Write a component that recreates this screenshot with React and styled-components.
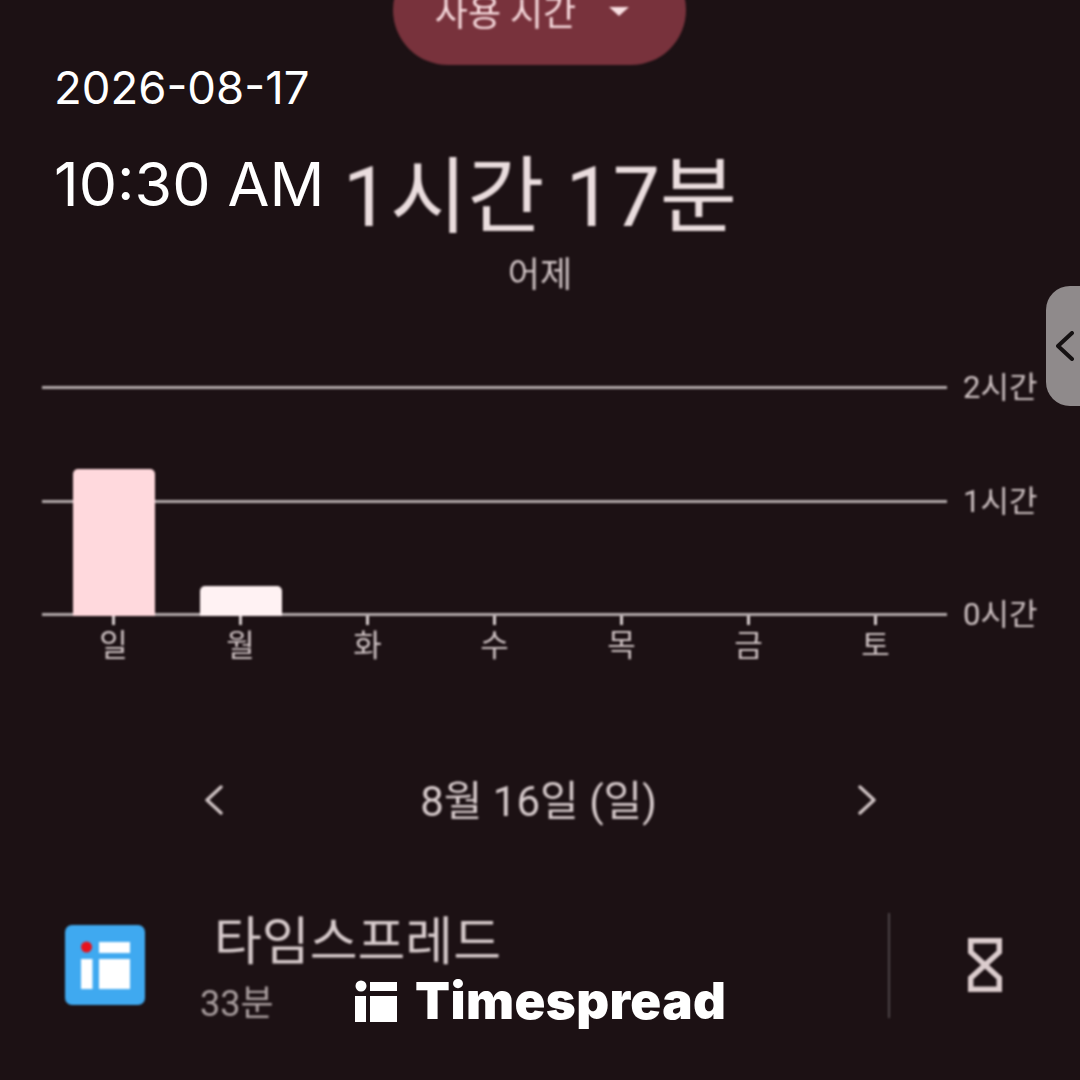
import React from 'react';
import styled, { createGlobalStyle } from 'styled-components';

const GlobalStyle = createGlobalStyle`
  html, body {
    margin: 0;
    padding: 0;
    background: #1c1114;
  }
`;

const Page = styled.div`
  position: relative;
  width: 1080px;
  height: 1080px;
  overflow: hidden;
  background: #1c1114;
  font-family: Roboto, "Noto Sans CJK KR", sans-serif;
`;

const Screen = styled.div`
  display: flex;
  flex-direction: column;
  align-items: center;
  height: 100%;
  filter: blur(0.8px);
`;

const Pill = styled.div`
  display: flex;
  align-items: center;
  justify-content: center;
  gap: 33px;
  width: 278px;
  height: 110px;
  margin-top: -45px;
  margin-right: 1px;
  padding-right: 15px;
  border-radius: 55px;
  background: #78323c;
  color: #f6d9dc;
  font-size: 36px;
  flex-shrink: 0;
`;

const Caret = styled.span`
  width: 0;
  height: 0;
  border-left: 10px solid transparent;
  border-right: 10px solid transparent;
  border-top: 9px solid #f9dfe2;
  margin-top: 2px;
`;

const Total = styled.div`
  margin-top: 87px;
  color: #eaddde;
  font-size: 84px;
  line-height: 92px;
`;

const Sub = styled.div`
  margin-top: 10px;
  color: #cfc3c4;
  font-size: 35px;
  line-height: 44px;
`;

const Chart = styled.div`
  align-self: stretch;
  display: flex;
  align-items: flex-start;
  margin-top: 88px;
  padding-left: 42px;
`;

const Plot = styled.div`
  width: 905px;
`;

const Grid = styled.div`
  position: relative;
  height: 230px;
  display: flex;
  flex-direction: column;
  justify-content: space-between;
`;

const GridLine = styled.div`
  height: 3px;
  background: #b3aaab;
`;

const Bars = styled.div`
  position: absolute;
  left: 8px;
  right: 8px;
  bottom: 0;
  display: grid;
  grid-template-columns: repeat(7, 127px);
  align-items: end;
`;

const BarSlot = styled.div`
  display: flex;
  justify-content: center;
`;

const Bar = styled.div`
  width: 82px;
  height: ${p => p.$h}px;
  border-radius: 5px 5px 0 0;
  background: ${p => p.$color};
`;

const Days = styled.div`
  display: grid;
  grid-template-columns: repeat(7, 127px);
  padding: 0 8px;
`;

const Day = styled.div`
  display: flex;
  flex-direction: column;
  align-items: center;
  color: #cfc3c4;
  font-size: 31px;
  line-height: 40px;

  &::before {
    content: '';
    width: 3px;
    height: 9px;
    margin-bottom: 1px;
    background: #d8cecf;
  }
`;

const YAxis = styled.div`
  height: 230px;
  margin-left: 16px;
  display: flex;
  flex-direction: column;
  justify-content: space-between;
  color: #cfc3c4;
  font-size: 31px;
`;

const YLabel = styled.div`
  height: 3px;
  line-height: 3px;
  white-space: nowrap;
`;

const DateNav = styled.div`
  align-self: stretch;
  display: flex;
  align-items: center;
  justify-content: space-between;
  margin-top: 105px;
  padding: 0 204px 0 205px;
  color: #d6cacb;
  font-size: 42px;
  line-height: 54px;
`;

const NavChevron = styled.svg`
  width: 18px;
  height: 30px;
  flex-shrink: 0;
  fill: none;
  stroke: ${p => p.$color};
  stroke-width: ${p => p.$weight}px;
  stroke-linecap: round;
  stroke-linejoin: round;
`;

const DateLabel = styled.span`
  margin-top: 4px;
  margin-right: 4px;
`;

const AppRow = styled.div`
  align-self: stretch;
  display: flex;
  align-items: center;
  margin-top: 77px;
  padding: 0 0 0 65px;
`;

const AppIcon = styled.svg`
  width: 80px;
  height: 80px;
  flex-shrink: 0;
`;

const AppText = styled.div`
  width: 743px;
  margin-top: 8px;
  padding-left: 55px;
  box-sizing: border-box;
`;

const AppName = styled.div`
  margin-left: 14px;
  color: #d6cacb;
  font-size: 52px;
  line-height: 58px;
`;

const AppTime = styled.div`
  margin-top: 12px;
  color: #a99e9f;
  font-size: 36px;
  line-height: 40px;
`;

const Divider = styled.div`
  width: 2px;
  height: 105px;
  background: #4e4548;
`;

const Hourglass = styled.svg`
  width: 34px;
  height: 54px;
  margin-left: 78px;
`;

const SideHandle = styled.div`
  position: absolute;
  top: 286px;
  right: 0;
  width: 24px;
  height: 120px;
  padding-left: 10px;
  display: flex;
  align-items: center;
  border-radius: 24px 0 0 24px;
  background: #8f8a8b;
`;

const Stamp = styled.div`
  position: absolute;
  left: 54px;
  color: #ffffff;
  font-family: Inter, sans-serif;
  white-space: nowrap;
`;

const StampDate = styled(Stamp)`
  top: 60px;
  font-size: 45.500px;
  line-height: 56px;
`;

const StampTime = styled(Stamp)`
  top: 147px;
  font-size: 60.800px;
  line-height: 74px;
`;

const Brand = styled.div`
  position: absolute;
  left: 355px;
  top: 972px;
  display: flex;
  align-items: center;
  gap: 18px;
  color: #ffffff;
  font-family: Inter, sans-serif;
  font-size: 51px;
  font-weight: 900;
  line-height: 58px;
  letter-spacing: 0.4px;
`;

const days = ['일', '월', '화', '수', '목', '금', '토'];
const bars = [
  { h: 147, color: '#ffd9dd' },
  { h: 30, color: '#fff2f3' },
];

const Chevron = ({ left, color, weight = 3.4 }) => (
  <NavChevron viewBox="0 0 18 30" $color={color} $weight={weight}>
    <path d={left ? 'M16 2L2 15L16 28' : 'M2 2L16 15L2 28'} />
  </NavChevron>
);

export default function App() {
  return (
    <Page>
      <GlobalStyle />
      <Screen>
        <Pill>
          <span>사용 시간</span>
          <Caret />
        </Pill>
        <Total>1시간 17분</Total>
        <Sub>어제</Sub>
        <Chart>
          <Plot>
            <Grid>
              <GridLine />
              <GridLine />
              <GridLine />
              <Bars>
                {days.map((d, i) => (
                  <BarSlot key={d}>
                    {bars[i] && <Bar $h={bars[i].h} $color={bars[i].color} />}
                  </BarSlot>
                ))}
              </Bars>
            </Grid>
            <Days>
              {days.map(d => <Day key={d}>{d}</Day>)}
            </Days>
          </Plot>
          <YAxis>
            <YLabel>2시간</YLabel>
            <YLabel>1시간</YLabel>
            <YLabel>0시간</YLabel>
          </YAxis>
        </Chart>
        <DateNav>
          <Chevron left color="#cfc3c4" />
          <DateLabel>8월 16일 (일)</DateLabel>
          <Chevron color="#cfc3c4" />
        </DateNav>
        <AppRow>
          <AppIcon viewBox="0 0 80 80">
            <rect width="80" height="80" rx="7" fill="#3fa9f0" />
            <circle cx="21.500" cy="22" r="5.500" fill="#e8121c" />
            <rect x="34" y="17" width="31" height="11" fill="#fff" />
            <rect x="16" y="34" width="11.500" height="30" fill="#fff" />
            <rect x="34" y="34" width="31" height="30" fill="#fff" />
          </AppIcon>
          <AppText>
            <AppName>타임스프레드</AppName>
            <AppTime>33분</AppTime>
          </AppText>
          <Divider />
          <Hourglass viewBox="0 0 34 54" fill="none" stroke="#dccdce" strokeWidth="5.500">
            <path d="M2.700 2.700H31.300V14L17 27L31.300 40V51.300H2.700V40L17 27L2.700 14Z" />
          </Hourglass>
        </AppRow>
      </Screen>
      <SideHandle>
        <Chevron left color="#151112" weight={4} />
      </SideHandle>
      <StampDate>2026-08-17</StampDate>
      <StampTime>10:30 AM</StampTime>
      <Brand>
        <svg width="42" height="42" viewBox="0 0 42 42" fill="#fff">
          <circle cx="6" cy="6" r="5.500" />
          <rect x="0" y="16" width="11" height="26" />
          <rect x="15" y="2" width="27" height="9" />
          <rect x="15" y="16" width="27" height="26" />
        </svg>
        <span>Timespread</span>
      </Brand>
    </Page>
  );
}
